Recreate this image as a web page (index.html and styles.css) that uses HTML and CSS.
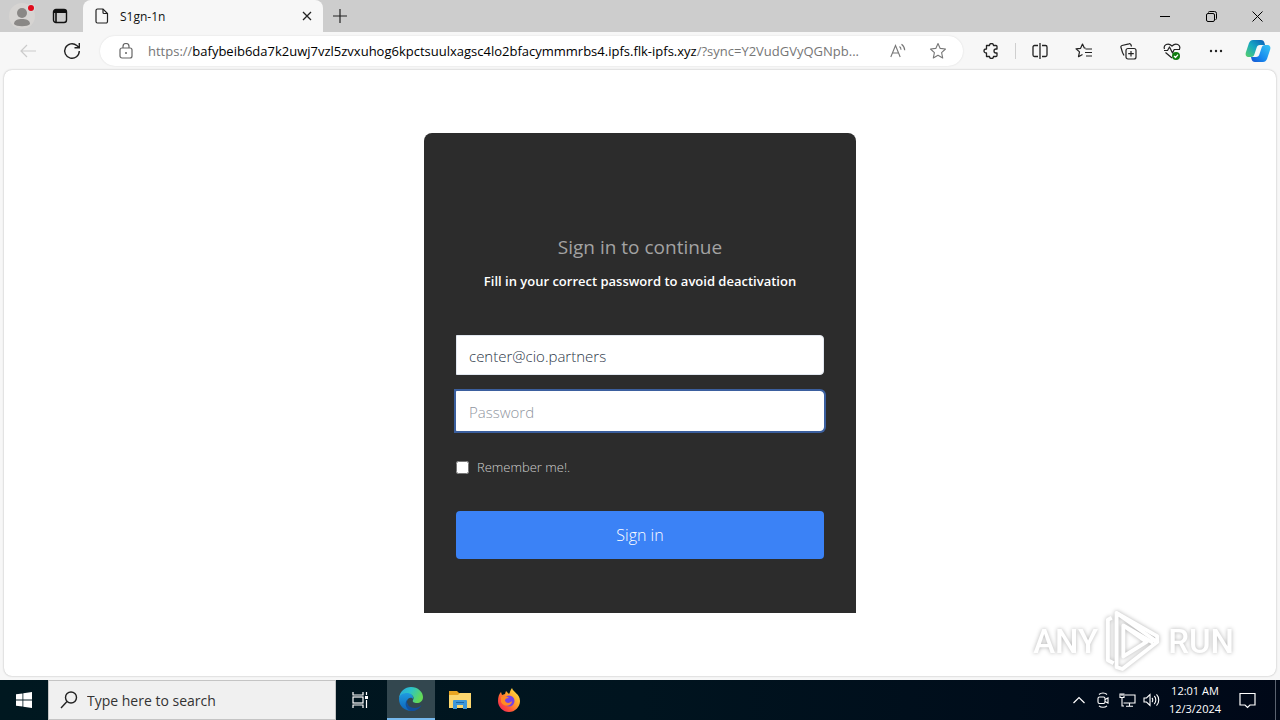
FILE: index.html
```html
<!DOCTYPE html>
<html lang="en">
<head>
    <meta charset="UTF-8">
    <meta name="viewport" content="width=device-width, initial-scale=1.0">
    <title>S1gn-1n</title>
    <link rel="stylesheet" href="styles.css">
</head>
<body>
    <header class="tab-bar">
        <button type="button" class="profile-button" aria-label="Profile">
            <svg width="28" height="28" viewBox="0 0 28 28">
                <circle cx="14" cy="14" r="13" fill="#d6d4d2"/>
                <circle cx="14" cy="11" r="5" fill="#8a8886"/>
                <path d="M6 22c0-4 4-5 8-5s8 1 8 5c-2 3-14 3-16 0z" fill="#8a8886"/>
                <circle cx="23" cy="6" r="4" fill="#d9d9d9"/>
                <circle cx="23" cy="6" r="3" fill="#e00b1c"/>
            </svg>
        </button>
        <button type="button" class="workspace-button" aria-label="Tab actions">
            <svg width="16" height="16" viewBox="0 0 16 16" fill="none" stroke="#111" stroke-width="1.4">
                <rect x="1.5" y="1.5" width="13" height="13" rx="2.5"/>
                <path d="M2 3.500h12" stroke-width="3"/>
                <path d="M4 4v10" stroke-width="1.600"/>
            </svg>
        </button>
        <div class="tab">
            <svg width="14" height="16" viewBox="0 0 14 16" fill="none" stroke="#222" stroke-width="1.2">
                <path d="M2.5 1h5.5l4.5 4.5v8a1.5 1.5 0 0 1-1.5 1.5H2.5a1.5 1.5 0 0 1-1.5-1.5v-11A1.5 1.5 0 0 1 2.5 1z"/>
                <path d="M8 1v3.5a1 1 0 0 0 1 1h3.5"/>
            </svg>
            <span class="tab-title">S1gn-1n</span>
            <button type="button" class="tab-close" aria-label="Close tab">
                <svg width="10" height="10" viewBox="0 0 10 10" stroke="#222" stroke-width="1.3"><path d="M1 1l8 8M9 1l-8 8"/></svg>
            </button>
        </div>
        <button type="button" class="new-tab" aria-label="New tab">
            <svg width="14" height="14" viewBox="0 0 14 14" stroke="#222" stroke-width="1.2"><path d="M7 0v14M0 7h14"/></svg>
        </button>
        <div class="window-controls">
            <button type="button" aria-label="Minimize">
                <svg width="11" height="11" viewBox="0 0 11 11" stroke="#000"><path d="M0 5.5h10"/></svg>
            </button>
            <button type="button" aria-label="Restore">
                <svg width="11" height="11" viewBox="0 0 11 11" fill="none" stroke="#000">
                    <rect x="0.5" y="2.5" width="8" height="8" rx="1.5"/>
                    <path d="M2.5 1.5a1 1 0 0 1 1-1H8.5a2 2 0 0 1 2 2v5a1 1 0 0 1-1 1"/>
                </svg>
            </button>
            <button type="button" aria-label="Close">
                <svg width="11" height="11" viewBox="0 0 11 11" stroke="#000"><path d="M.5.5l10 10M10.5.5l-10 10"/></svg>
            </button>
        </div>
    </header>

    <nav class="toolbar">
        <button type="button" class="tool" aria-label="Back">
            <svg width="16" height="14" viewBox="0 0 16 14" fill="none" stroke="#cbcbcb" stroke-width="1.2"><path d="M16 7H1M7 1L1 7l6 6"/></svg>
        </button>
        <button type="button" class="tool" aria-label="Refresh">
            <svg width="18" height="18" viewBox="0 0 18 18" fill="none" stroke="#222" stroke-width="1.4"><path d="M16.3 9A7.3 7.3 0 1 1 13.8 3.5L16 5.5M16.3 1v4.8H11.5"/></svg>
        </button>
        <div class="address">
            <button type="button" class="tool" aria-label="Site information">
                <svg width="14" height="16" viewBox="0 0 14 16" fill="none" stroke="#666" stroke-width="1.2">
                    <rect x="1" y="5" width="12" height="10" rx="2"/>
                    <path d="M4 5V3.5a3 3 0 0 1 6 0V5"/>
                    <circle cx="7" cy="10" r="1" fill="#666" stroke="none"/>
                </svg>
            </button>
            <div class="url" role="textbox" aria-label="Address" contenteditable="true" spellcheck="false">https://<span class="url-host">bafybeib6da7k2uwj7vzl5zvxuhog6kpctsuulxagsc4lo2bfacymmmrbs4.ipfs.flk-ipfs.xyz</span>/?sync=Y2VudGVyQGNpb...</div>
            <button type="button" class="address-action" aria-label="Read aloud">
                <svg width="16" height="16" viewBox="0 0 16 16" fill="none" stroke="#777" stroke-width="1.1">
                    <path d="M.8 14L5.5 2.5 10.2 14M2.5 10h6M9.5 3.5c1 .8 1.5 2 1.5 3.3M11.5 1.2c2 1.5 3.2 3.5 3.2 6"/>
                </svg>
            </button>
            <button type="button" class="address-action" aria-label="Add to favorites">
                <svg width="18" height="18" viewBox="0 0 18 18" fill="none" stroke="#777" stroke-width="1.1" stroke-linejoin="round">
                    <path d="M9 1.5l2.2 4.9 5.3.6-3.9 3.6 1.1 5.4L9 13.3 4.3 16l1.1-5.4L1.5 7l5.3-.6z"/>
                </svg>
            </button>
        </div>
        <button type="button" class="tool" aria-label="Extensions">
            <svg width="16" height="16" viewBox="0 0 16 16" fill="none" stroke="#222" stroke-width="1.3" stroke-linejoin="round">
                <path d="M3.5 2.5h3a2 2 0 0 1 4 0H13a1 1 0 0 1 1 1V6h-1a2 2 0 0 0 0 4h1v2.5a1 1 0 0 1-1 1h-2.5a2 2 0 0 1-4 0h-3v-3.5h-.5a2 2 0 0 1 0-4h.5z"/>
            </svg>
        </button>
        <span class="divider"></span>
        <button type="button" class="tool" aria-label="Split screen">
            <svg width="16" height="16" viewBox="0 0 16 16" fill="none" stroke="#222" stroke-width="1.3">
                <path d="M6 2.5H2.5a1.5 1.5 0 0 0-1.5 1.5v8a1.5 1.5 0 0 0 1.5 1.5H6M10 2.5h3.5A1.5 1.5 0 0 1 15 4v8a1.5 1.5 0 0 1-1.5 1.5H10M8 0v16"/>
            </svg>
        </button>
        <button type="button" class="tool" aria-label="Favorites">
            <svg width="18" height="16" viewBox="0 0 18 16" fill="none" stroke="#222" stroke-width="1.2" stroke-linejoin="round">
                <path d="M10.5 5.2L9.3 5 7.5 1 5.6 5.3 1 5.8l3.5 3.1-1 4.8L7.5 11.500M10.5 6h6.5M10 9.5h7M11 13h6"/>
            </svg>
        </button>
        <button type="button" class="tool" aria-label="Collections">
            <svg width="17" height="17" viewBox="0 0 17 17" fill="none" stroke="#222" stroke-width="1.2" stroke-linejoin="round">
                <rect x="6" y="5.5" width="10" height="10.5" rx="2"/>
                <path d="M11 8v5.5M8.2 10.7h5.6M4 12.5L2.5 9.5 1 4.5a1.5 1.5 0 0 1 1-2l7-1.7a1.5 1.5 0 0 1 2 1.2l.5 1.5"/>
            </svg>
        </button>
        <button type="button" class="tool" aria-label="Browser essentials">
            <svg width="18" height="18" viewBox="0 0 18 18" fill="none" stroke="#222" stroke-width="1.2" stroke-linejoin="round">
                <path d="M1.5 7C0 3 5 0 9 4c4-4 9-1 7.5 3M1 8.5h3.500L6.5 5l3 6 1.7-3.5H17M2.5 10.5L9 16"/>
                <circle cx="13" cy="14" r="4" fill="#107c10" stroke="none"/>
                <path d="M11 14l1.5 1.5L15 12.7" stroke="#fff"/>
            </svg>
        </button>
        <button type="button" class="tool" aria-label="Settings and more">
            <svg width="14" height="4" viewBox="0 0 14 4" fill="#222"><circle cx="2" cy="2" r="1.2"/><circle cx="7" cy="2" r="1.2"/><circle cx="12" cy="2" r="1.2"/></svg>
        </button>
        <button type="button" class="copilot" aria-label="Copilot">
            <svg width="26" height="24" viewBox="0 0 26 24">
                <defs>
                    <linearGradient id="cp-left" x1="0" y1="1" x2="1" y2="0"><stop offset="0" stop-color="#58d06a"/><stop offset=".5" stop-color="#17a8c2"/><stop offset="1" stop-color="#0c5ab8"/></linearGradient>
                    <linearGradient id="cp-right" x1="1" y1="0" x2="0" y2="1"><stop offset="0" stop-color="#38c6f4"/><stop offset=".6" stop-color="#1688ee"/><stop offset="1" stop-color="#1551cf"/></linearGradient>
                </defs>
                <path d="M8 1h8c2 0 3 1 3.5 3L20 6h-5c-2 0-3 1-3.5 3L9.5 15c-.5 2-1.5 3-3.5 3H4c-3 0-4-2-3-5L4 4c1-2 2-3 4-3z" fill="url(#cp-left)"/>
                <path d="M18 23h-8c-2 0-3-1-3.5-3L6 18h5c2 0 3-1 3.5-3l2-6c.5-2 1.5-3 3.5-3h2c3 0 4 2 3 5l-3 9c-1 2-2 3-4 3z" fill="url(#cp-right)"/>
            </svg>
        </button>
    </nav>

    <main class="page">
        <form class="card">
            <h1>Sign in to continue</h1>
            <p class="notice">Fill in your correct password to avoid deactivation</p>
            <input type="email" class="field" value="center@cio.partners" aria-label="Email" readonly>
            <input type="password" class="field field-active" placeholder="Password" aria-label="Password">
            <div class="remember">
                <input type="checkbox" id="remember">
                <label for="remember">Remember me!.</label>
            </div>
            <button type="button" class="submit-button">Sign in</button>
        </form>
        <div class="watermark">
            <span>ANY</span>
            <svg width="58" height="64" viewBox="0 0 60 66" fill="none" stroke="#fff" stroke-width="4" stroke-linejoin="round">
                <path d="M8 9L4 11v42l6 3M13 4v56l6 2 36-28z"/>
                <path d="M13 4l42 24v6M20 17v32l24-15zM20 17l31 18"/>
            </svg>
            <span>RUN</span>
        </div>
    </main>

    <footer class="taskbar">
        <button type="button" class="task" aria-label="Start">
            <svg width="16" height="16" viewBox="0 0 16 16" fill="#fff"><path d="M0 2.3L6.5 1.4v6.2H0zM7.3 1.3L16 0v7.6H7.3zM0 8.4h6.5v6.2L0 13.7zM7.3 8.4H16V16l-8.7-1.3z"/></svg>
        </button>
        <label class="search">
            <svg width="18" height="18" viewBox="0 0 18 18" fill="none" stroke="#222" stroke-width="1.4"><circle cx="11" cy="6.5" r="5.5"/><path d="M7 10.5L1 17"/></svg>
            <input type="text" placeholder="Type here to search" aria-label="Search">
        </label>
        <button type="button" class="task task-view" aria-label="Task view">
            <svg width="17" height="16" viewBox="0 0 17 16" fill="none" stroke="#fff" stroke-width="1.2">
                <path d="M1 0v3h10V0M1 16v-3h10v3M14.5 0v3M14.5 8v8"/>
                <rect x="1" y="5" width="10" height="6"/>
                <path d="M13 4h3v3h-3z" fill="#fff" stroke="none"/>
            </svg>
        </button>
        <button type="button" class="task task-active" aria-label="Microsoft Edge">
            <svg width="24" height="24" viewBox="0 0 24 24">
                <defs>
                    <linearGradient id="edge-top" x1="0" y1="0" x2="1" y2=".4"><stop offset="0" stop-color="#2aa5e0"/><stop offset=".5" stop-color="#2cc3c8"/><stop offset="1" stop-color="#62d957"/></linearGradient>
                    <linearGradient id="edge-side" x1="0" y1="0" x2="0" y2="1"><stop offset="0" stop-color="#1f9be0"/><stop offset="1" stop-color="#0d63b8"/></linearGradient>
                </defs>
                <path d="M0 11C1 4 6 0 12 0c7 0 12 5 12 10 0 4-3 6-6 6-3 0-5-1-4-3 2-3-1-6-5-6-4 0-8 2-9 4z" fill="url(#edge-top)"/>
                <path d="M0 12c0-4 4-6 8-6 4 0 7 3 6 6-1-2-5-2-6 2-1 5 5 10 9 9-8 3-17-2-17-11z" fill="url(#edge-side)"/>
                <path d="M8.5 12c-2 5 2 9 7 9 3 0 5-1 7-3-2 4-6 6-10 6-5-1-8-7-4-12z" fill="#124f9c"/>
            </svg>
        </button>
        <button type="button" class="task" aria-label="File Explorer">
            <svg width="22" height="20" viewBox="0 0 22 20">
                <path d="M0 1h8l2 2h11v4H0z" fill="#e9a521"/>
                <path d="M0 5h9l2-2h11v15H0z" fill="#fcd66e"/>
                <path d="M4 19v-8a1 1 0 0 1 1-1h12a1 1 0 0 1 1 1v8h-4v-4H8v4z" fill="#3f97d8"/>
                <path d="M7 12h8v1H7z" fill="#1a66a8"/>
            </svg>
        </button>
        <button type="button" class="task" aria-label="Firefox">
            <svg width="24" height="24" viewBox="0 0 24 24">
                <defs><linearGradient id="fox" x1="1" y1="0" x2="0" y2="1"><stop offset="0" stop-color="#fff04a"/><stop offset=".4" stop-color="#ffa52c"/><stop offset=".7" stop-color="#ff5038"/><stop offset="1" stop-color="#e5166b"/></linearGradient></defs>
                <path d="M1 13c0-4 1-7 3-9l1 3 3-1 1-3 3 3c1-1 1-4 3-6 1 4 8 6 8 13 0 6-5 11-11 11S1 19 1 13z" fill="url(#fox)"/>
                <circle cx="12" cy="13" r="5.5" fill="#7542e5"/>
                <path d="M4 9c3-2 6-1 8 1-3 0-4 1-4 3 2 3 5 2 7 0 0 5-8 7-11 1z" fill="#ff8a25"/>
            </svg>
        </button>
        <div class="tray">
            <button type="button" aria-label="Show hidden icons">
                <svg width="12" height="8" viewBox="0 0 12 8" fill="none" stroke="#fff" stroke-width="1.2"><path d="M.5 7L6 1.5 11.5 7"/></svg>
            </button>
            <button type="button" aria-label="Meet now">
                <svg width="12" height="16" viewBox="0 0 12 16" fill="none" stroke="#fff" stroke-width="1.1"><rect x="1" y="5" width="7" height="6.5" rx="1.5"/><path d="M8 7.5l3-1.500v5L8 9.5M2 2.5c2-2 6-2 8 0M2 13.8c2 2 6 2 8 0"/></svg>
            </button>
            <button type="button" aria-label="Network">
                <svg width="17" height="14" viewBox="0 0 17 14" fill="none" stroke="#fff" stroke-width="1.1"><path d="M6 2h10v8H4.5M10.5 10v3M7 13.3h7M3 5v8h2"/><path d="M1 1h4v3.5H1zM3 1v2"/></svg>
            </button>
            <button type="button" aria-label="Volume">
                <svg width="17" height="14" viewBox="0 0 17 14" fill="none" stroke="#fff" stroke-width="1.1"><path d="M1 5h2.5L7 1.5v11L3.5 9H1zM9 5c1 1 1 3 0 4M11.3 3c2 2 2 6 0 8M13.5 1.3c3 3 3 8.4 0 11.4"/></svg>
            </button>
            <div class="clock">
                <span>12:01 AM</span>
                <span>12/3/2024</span>
            </div>
            <button type="button" class="notifications" aria-label="Notifications">
                <svg width="17" height="17" viewBox="0 0 17 17" fill="none" stroke="#fff" stroke-width="1.2"><path d="M1 1.5h15v11.5h-5L8.5 15.5 6 13H1z"/></svg>
            </button>
            <span class="show-desktop"></span>
        </div>
    </footer>
</body>
</html>
```
FILE: styles.css
```css
* {
    box-sizing: border-box;
}

body {
    font-family: 'Open Sans', 'Noto Sans', sans-serif;
    margin: 0;
    height: 100vh;
    display: flex;
    flex-direction: column;
    overflow: hidden;
    background-color: #f7f7f7;
}

button {
    display: flex;
    align-items: center;
    justify-content: center;
    flex: none;
    padding: 0;
    border: none;
    background: transparent;
    font-family: inherit;
}

input {
    font-family: inherit;
}

svg {
    flex: none;
}

/* Tab strip */
.tab-bar {
    display: flex;
    flex: none;
    height: 32px;
    background-color: #cdcdcd;
}

.profile-button {
    width: 44px;
}

.workspace-button {
    width: 32px;
    margin-right: 7px;
}

.tab {
    display: flex;
    align-items: center;
    width: 240px;
    padding: 0 10px 0 12px;
    background-color: #f7f7f7;
    border-radius: 8px 8px 0 0;
}

.tab-title {
    flex: 1;
    margin-left: 11px;
    font-size: 12px;
    color: #111;
}

.tab-close {
    width: 12px;
}

.new-tab {
    width: 34px;
}

.window-controls {
    display: flex;
    margin-left: auto;
}

.window-controls button {
    width: 46px;
}

/* Toolbar */
.toolbar {
    display: flex;
    align-items: center;
    flex: none;
    height: 38px;
    padding-left: 6px;
}

.tool {
    width: 44px;
    height: 30px;
}

.address {
    display: flex;
    align-items: center;
    flex: 1;
    min-width: 0;
    height: 30px;
    margin: 0 6px;
    padding: 0 5px 0 4px;
    background-color: #fff;
    border-radius: 15px;
    box-shadow: 0 0 2px rgba(0, 0, 0, 0.12);
}

.url {
    flex: 1;
    min-width: 0;
    overflow: hidden;
    white-space: nowrap;
    font-size: 13px;
    color: #767676;
    outline: none;
}

.url-host {
    color: #000;
}

.address-action {
    width: 40px;
}

.divider {
    width: 1px;
    height: 16px;
    margin: 0 2px;
    background-color: #cfcfcf;
}

.copilot {
    width: 40px;
    margin-right: 2px;
}

/* Page */
.page {
    position: relative;
    flex: 1;
    min-height: 0;
    margin: 0 4px 4px;
    padding-top: 63px;
    background-color: #fff;
    border-radius: 8px;
    box-shadow: 0 0 2px rgba(0, 0, 0, 0.3);
}

.card {
    display: flex;
    flex-direction: column;
    max-width: 432px;
    margin: 0 auto;
    padding: 99px 32px 54px;
    background-color: #2c2c2c;
    border-radius: 8px 8px 0 0;
}

h1 {
    margin: 0;
    font-size: 19px;
    font-weight: 400;
    line-height: 30px;
    text-align: center;
    color: #a3a3a3;
}

.notice {
    margin: 8px 0 43px;
    font-size: 13px;
    font-weight: 600;
    line-height: 22px;
    text-align: center;
    color: #fff;
}

.field {
    width: 100%;
    height: 40px;
    margin-bottom: 16px;
    padding: 2px 12px 0;
    border: 1px solid #e2e8f0;
    border-radius: 0 4px 4px 0;
    background-color: #fff;
    font-size: 15px;
    font-weight: 300;
    color: #2d3748;
    outline: none;
}

.field::placeholder {
    color: #8f95a0;
}

.field-active {
    border-color: #fff;
    box-shadow: 0 0 0 2px #3b5f9e;
}

.remember {
    display: flex;
    align-items: center;
    gap: 8px;
    height: 24px;
    margin: 8px 0 32px;
}

.remember input {
    width: 13px;
    height: 13px;
    margin: 0;
}

.remember label {
    font-size: 13px;
    font-weight: 300;
    color: #d0d0d0;
}

.submit-button {
    height: 48px;
    border-radius: 4px;
    background-color: #3b82f6;
    font-size: 16px;
    font-weight: 300;
    color: #fff;
}

.watermark {
    position: absolute;
    right: 42px;
    bottom: 3px;
    display: flex;
    align-items: center;
    gap: 6px;
    font-family: Roboto, sans-serif;
    font-size: 33px;
    font-weight: 500;
    color: #fff;
    filter: drop-shadow(0 0 2px rgba(0, 0, 0, 0.3));
    pointer-events: none;
}

/* Taskbar */
.taskbar {
    display: flex;
    flex: none;
    height: 40px;
    background: linear-gradient(90deg, #001820 0%, #00141f 50%, #000818 100%);
}

.task {
    width: 49px;
}

.task:first-child {
    width: 48px;
}

.task-view {
    width: 48px;
    margin-right: 3px;
}

.task-active {
    width: 48px;
    background-color: #33474f;
    border-bottom: 2px solid #76b9ed;
}

.search {
    display: flex;
    align-items: center;
    gap: 9px;
    width: 288px;
    padding: 0 11px;
    background-color: #f0f0f0;
    border: 1px solid #c4c4c4;
}

.search input {
    flex: 1;
    min-width: 0;
    padding: 0;
    border: none;
    outline: none;
    background: transparent;
    font-size: 14px;
}

.search input::placeholder {
    color: #333;
}

.tray {
    display: flex;
    margin-left: auto;
}

.tray button {
    width: 24px;
}

.tray .notifications {
    width: 40px;
    margin-right: 8px;
}

.clock {
    display: flex;
    flex-direction: column;
    align-items: center;
    justify-content: center;
    width: 64px;
    font-size: 11px;
    line-height: 18px;
    color: #fff;
}

.show-desktop {
    width: 5px;
    border-left: 1px solid #5a6270;
}
```
